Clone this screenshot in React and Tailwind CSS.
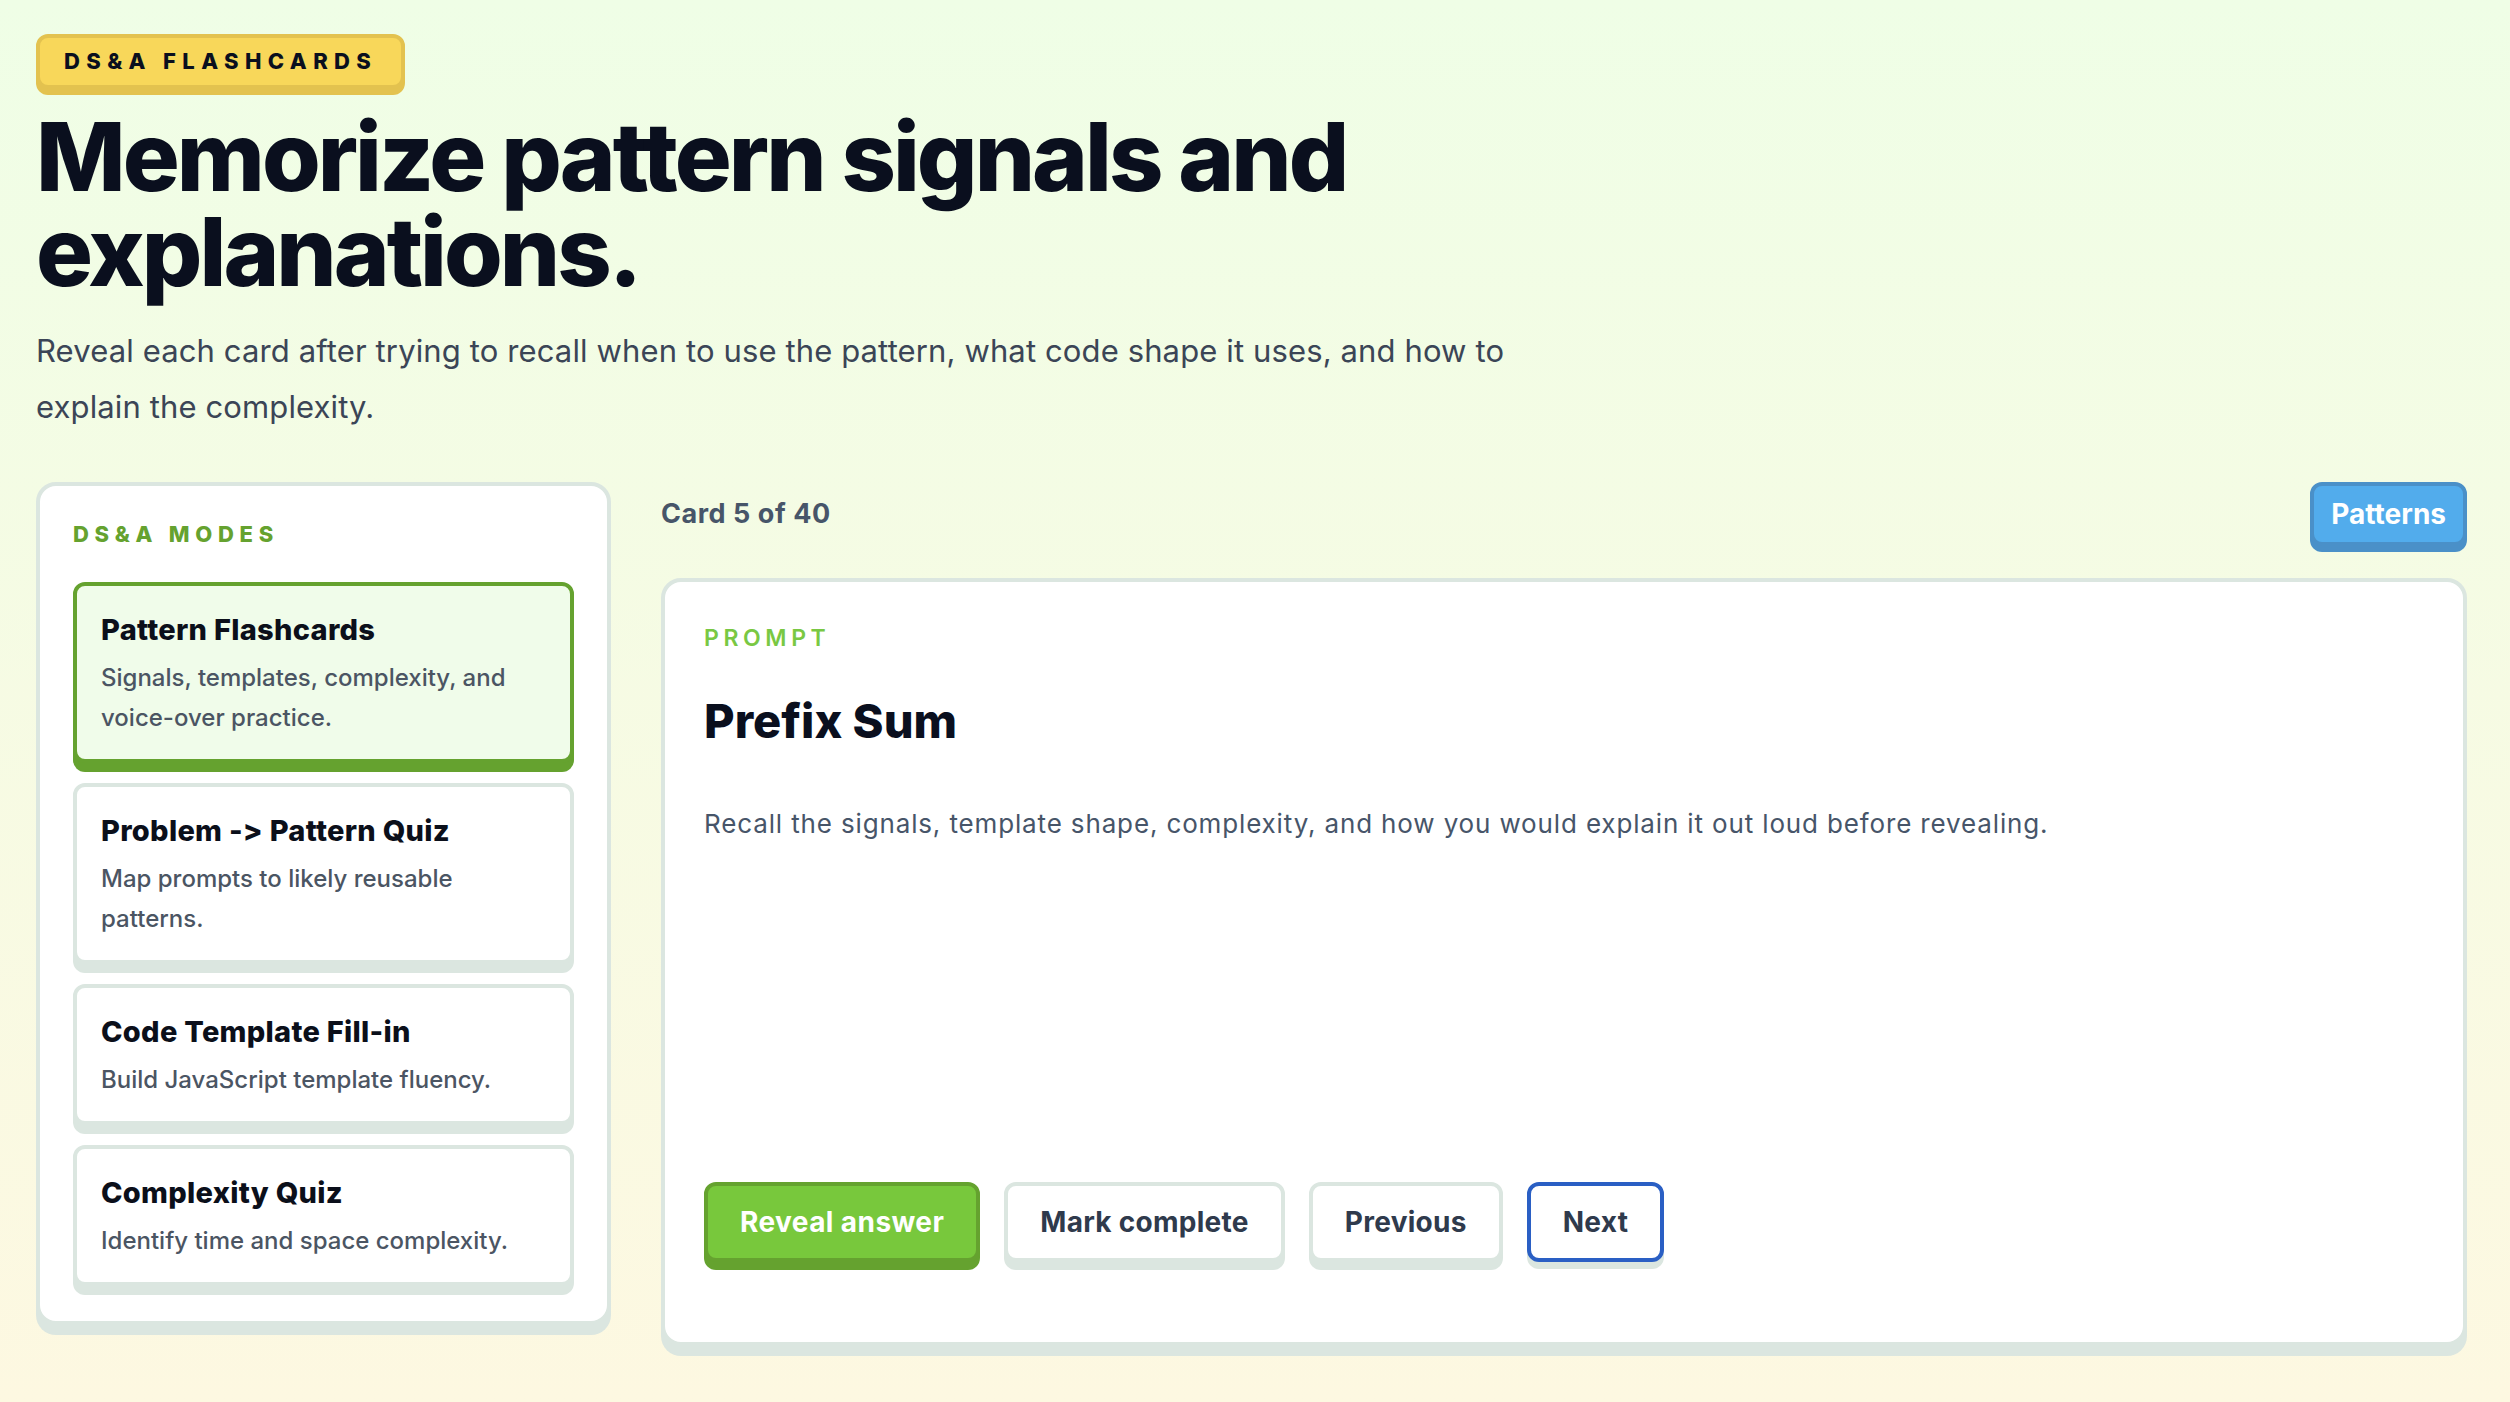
import React from 'react';

const modes = [
  { title: 'Pattern Flashcards', desc: 'Signals, templates, complexity, and voice-over practice.', active: true },
  { title: 'Problem -> Pattern Quiz', desc: 'Map prompts to likely reusable patterns.' },
  { title: 'Code Template Fill-in', desc: 'Build JavaScript template fluency.' },
  { title: 'Complexity Quiz', desc: 'Identify time and space complexity.' },
];

function ModeCard({ title, desc, active }) {
  return (
    <button
      className={`w-full text-left rounded-[12px] border-4 px-6 pt-6 pb-[21px] ${
        active
          ? 'border-[#65a22f] bg-[#f0fcea] shadow-[0_9px_0_#65a22f]'
          : 'border-[#dbe6e0] bg-white shadow-[0_9px_0_#dbe6e0]'
      }`}
    >
      <div className="text-[29px] font-extrabold leading-10 tracking-[0.01em] text-[#0b0f1a]">{title}</div>
      <div className="mt-2 text-[24px] font-medium leading-10 text-[#4b5563]">{desc}</div>
    </button>
  );
}

export default function App() {
  return (
    <div className="min-h-screen bg-linear-to-b from-[#effee6] to-[#fdf8e1] font-['Inter',sans-serif] [font-feature-settings:'calt'_0] text-[#0a0f1e] pl-[36px] pr-[43px] pt-[34px] pb-10">
      <header className="max-w-[1520px]">
        <span className="inline-block rounded-[12px] border-4 border-[#e3c24f] bg-[#f8d75a] px-6 py-[10px] text-[22px] font-extrabold leading-[27px] tracking-[0.29em] shadow-[0_6px_0_#e3c24f]">
          DS&amp;A FLASHCARDS
        </span>
        <h1 className="mt-5 text-[95px] font-extrabold leading-[95px] tracking-[-0.031em]">
          Memorize pattern signals and explanations.
        </h1>
        <p className="mt-6 text-[31px] leading-[56px] tracking-[0.004em] text-[#3b4556]">
          Reveal each card after trying to recall when to use the pattern, what code shape it uses, and how to explain the complexity.
        </p>
      </header>

      <div className="mt-[47px] grid grid-cols-[575px_1fr] gap-[50px] items-start">
        <aside className="rounded-[20px] border-4 border-[#dbe6e0] bg-white px-[33px] pt-8 pb-[35px] shadow-[0_10px_0_#dbe6e0]">
          <h2 className="text-[22px] font-extrabold leading-8 tracking-[0.26em] text-[#65a22f]">DS&amp;A MODES</h2>
          <div className="mt-8 flex flex-col gap-5">
            {modes.map((m) => (
              <ModeCard key={m.title} {...m} />
            ))}
          </div>
        </aside>

        <main>
          <div className="flex h-16 items-center justify-between">
            <span className="text-[27px] font-bold tracking-[0.02em] text-[#475569]">Card 5 of 40</span>
            <button className="rounded-[12px] border-4 border-[#4a90c8] bg-[#52acec] px-[17px] py-[10px] text-[28px] font-bold leading-9 text-white shadow-[0_6px_0_#4a90c8]">
              Patterns
            </button>
          </div>

          <section className="mt-8 flex min-h-[768px] flex-col rounded-[20px] border-4 border-[#dbe6e0] bg-white px-[39px] pt-10 pb-[80px] shadow-[0_10px_0_#dbe6e0]">
            <div className="text-[23px] font-semibold leading-8 tracking-[0.2em] text-[#79c843]">PROMPT</div>
            <h2 className="mt-[39px] text-[47px] font-extrabold leading-[55px] text-[#0a0f1e]">Prefix Sum</h2>
            <p className="mt-[56px] text-[26px] leading-10 tracking-[0.033em] text-[#475569]">
              Recall the signals, template shape, complexity, and how you would explain it out loud before revealing.
            </p>
            <div className="mt-auto flex gap-6">
              <button className="rounded-[12px] border-4 border-[#65a22f] bg-[#78c83c] px-8 py-[18px] text-[28px] font-bold leading-9 tracking-[0.015em] text-white shadow-[0_8px_0_#65a22f]">
                Reveal answer
              </button>
              <button className="rounded-[12px] border-4 border-[#dbe6e0] bg-white px-8 py-[18px] text-[28px] font-bold leading-9 tracking-[0.01em] text-[#2f3a4c] shadow-[0_8px_0_#dbe6e0]">
                Mark complete
              </button>
              <button className="rounded-[12px] border-4 border-[#dbe6e0] bg-white px-8 py-[18px] text-[28px] font-bold leading-9 tracking-[0.01em] text-[#2f3a4c] shadow-[0_8px_0_#dbe6e0]">
                Previous
              </button>
              <button className="rounded-[12px] border-4 border-[#2a5fc4] bg-white px-8 py-[18px] text-[28px] font-bold leading-9 tracking-[0.01em] text-[#2f3a4c] shadow-[0_7px_0_#dbe6e0]">
                Next
              </button>
            </div>
          </section>
        </main>
      </div>
    </div>
  );
}
